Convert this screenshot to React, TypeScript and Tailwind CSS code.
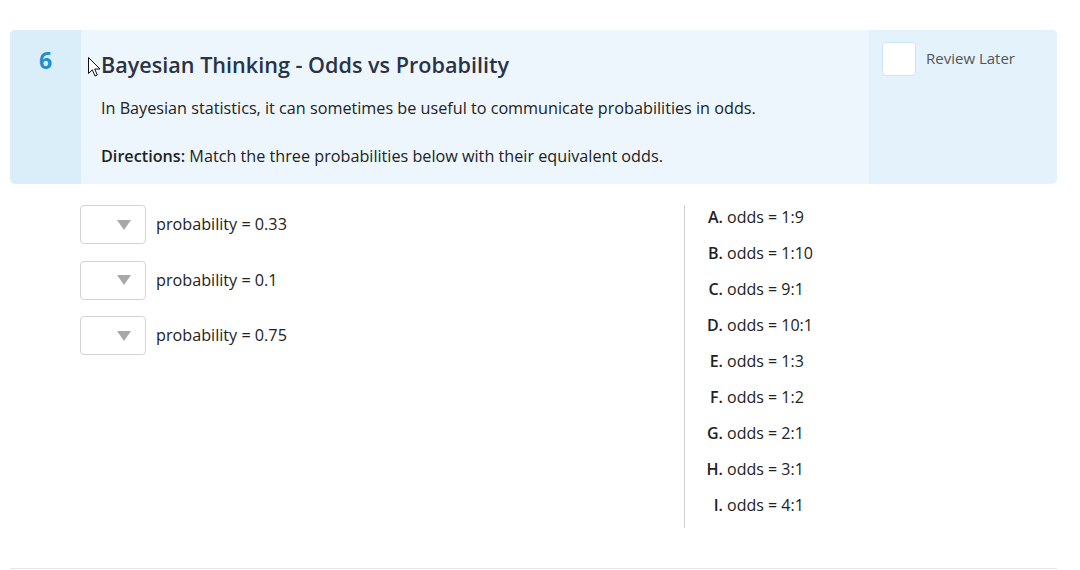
import React from "react";

const odds = [
  ["A.", "odds = 1:9"],
  ["B.", "odds = 1:10"],
  ["C.", "odds = 9:1"],
  ["D.", "odds = 10:1"],
  ["E.", "odds = 1:3"],
  ["F.", "odds = 1:2"],
  ["G.", "odds = 2:1"],
  ["H.", "odds = 3:1"],
  ["I.", "odds = 4:1"],
];

const probs = ["probability = 0.33", "probability = 0.1", "probability = 0.75"];

function Dropdown() {
  return (
    <div className="w-[66px] h-[39px] rounded-[4px] border border-[#d4d4d4] bg-white flex items-center justify-end pr-[14px]">
      <svg width="14" height="10" viewBox="0 0 14 10">
        <polygon points="0,0 14,0 7,10" fill="#a8a8a8" />
      </svg>
    </div>
  );
}

export default function App() {
  return (
    <div
      className="w-[1080px] h-[570px] bg-white relative overflow-hidden"
      style={{ fontFamily: '"Open Sans", "Liberation Sans", sans-serif' }}
    >
      <div className="pt-[30px] pl-[10px] pr-[23px]">
        <div className="flex h-[154px] rounded-[5px] overflow-hidden">
          <div className="w-[71px] bg-[#daeef9] flex justify-center pt-[14px]">
            <span className="text-[23px] font-bold text-[#1b8fd2] leading-[32px]">6</span>
          </div>
          <div className="flex-1 bg-[#edf6fc] pl-[20px] pt-[20px] relative">
            <svg
              className="absolute left-[7px] top-[27px]"
              width="13"
              height="20"
              viewBox="0 0 13 20"
            >
              <path
                d="M0.5 0.5 L0.5 16.5 L4.3 12.8 L7 19 L9.3 18 L6.7 12 L12 12 Z"
                fill="white"
                stroke="#111"
                strokeWidth="1"
                strokeLinejoin="round"
              />
            </svg>
            <h1 className="text-[21.6px] font-semibold text-[#2a3346] leading-[30px]">
              Bayesian Thinking - Odds vs Probability
            </h1>
            <p className="mt-[17px] text-[16.2px] text-[#222] leading-[22px]">
              In Bayesian statistics, it can sometimes be useful to communicate probabilities in odds.
            </p>
            <p className="mt-[26px] text-[16.2px] text-[#222] leading-[22px]">
              <span className="font-semibold">Directions:</span> Match the three probabilities below with their equivalent odds.
            </p>
          </div>
          <div className="w-[188px] bg-[#e4f3fb] pl-[13px] pt-[12px] flex items-start gap-[10px]">
            <div className="w-[34px] h-[34px] bg-white rounded-[4px] border border-[#cde6f5]" />
            <span className="text-[15px] text-[#555] leading-[34px] -mt-[1px]">Review Later</span>
          </div>
        </div>

        <div className="flex mt-[21px]">
          <div className="w-[674px] pl-[70px] flex flex-col gap-[16.5px]">
            {probs.map((p) => (
              <div key={p} className="flex items-center gap-[10px]">
                <Dropdown />
                <span className="text-[16.2px] text-[#222]">{p}</span>
              </div>
            ))}
          </div>
          <div className="border-l border-[#cfcfcf] h-[323px] flex flex-col pt-[1px]">
            {odds.map(([l, t]) => (
              <div key={l} className="flex shrink-0 text-[16px] text-[#222] leading-[22px] h-[36px]">
                <span className="w-[38px] text-right font-semibold">{l}</span>
                <span className="ml-[4px]">{t}</span>
              </div>
            ))}
          </div>
        </div>
      </div>
      <div className="absolute left-[10px] right-[23px] top-[568px] h-px bg-[#e6e6e6]" />
    </div>
  );
}
